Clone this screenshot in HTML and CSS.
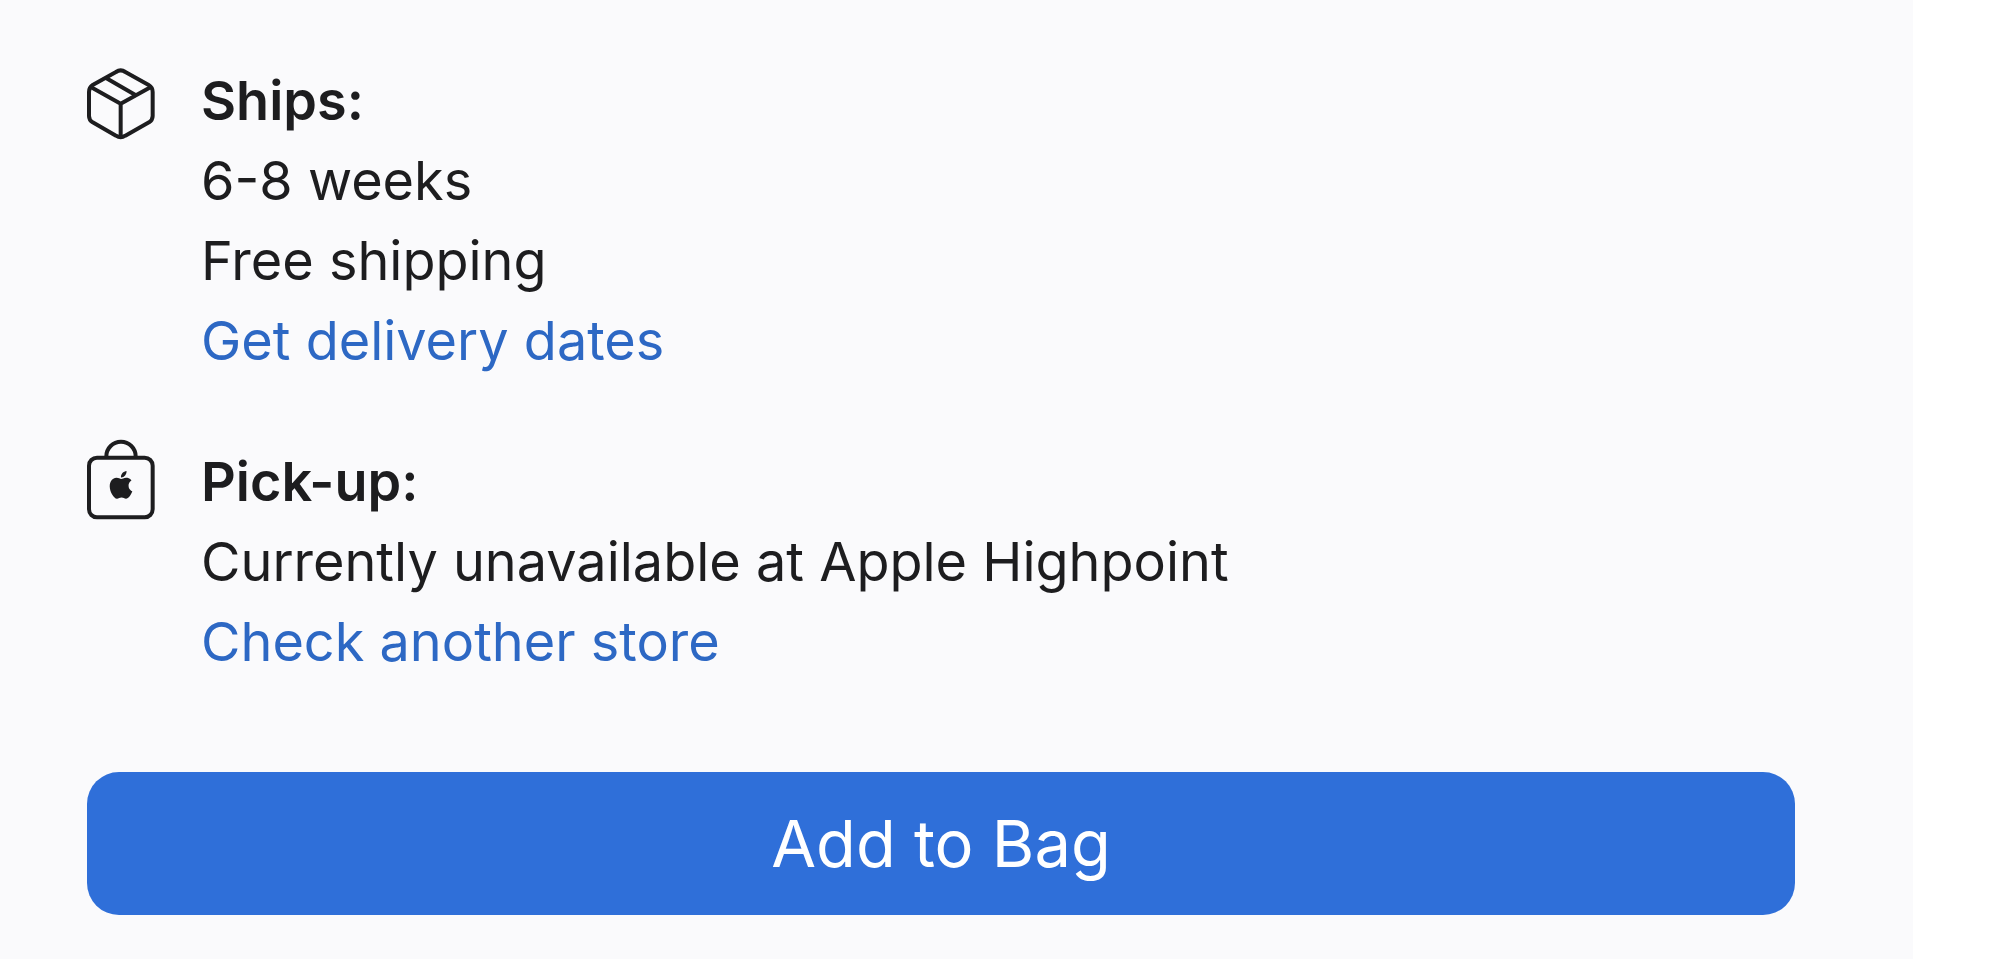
FILE: index.html
```
<!DOCTYPE html>
<html lang="en">
<head>
    <meta charset="UTF-8">
    <meta name="viewport" content="width=device-width, initial-scale=1.0">
    <title>Add to Bag</title>
    <link rel="stylesheet" href="styles.css">
</head>
<body>
    <main class="panel">
        <section class="option">
            <svg class="icon" viewBox="51 21 204 252" aria-hidden="true">
                <path class="line" d="M138 66 Q152 56 166 66 L236 105 Q248 112 248 126 L248 198 Q248 210 237 217 L166 257 Q152 266 138 257 L68 217 Q57 210 57 198 L57 126 Q57 112 68 105 Z" />
                <path class="line" d="M61 110 L152 161 L244 110 M152 161 V262 M108 84 L195 134" />
            </svg>
            <div class="details">
                <h2>Ships:</h2>
                <p>6-8 weeks</p>
                <p>Free shipping</p>
                <a href="#">Get delivery dates</a>
            </div>
        </section>

        <section class="option">
            <svg class="icon" viewBox="51 54 204 252" aria-hidden="true">
                <rect class="line" x="57" y="113" width="191" height="179" rx="24" />
                <path class="line" d="M109 113 V109 A44 44 0 0 1 197 109 V113" />
                <path class="apple" transform="translate(111.5 153) scale(3.46)" d="M12.152 6.896c-.948 0-2.415-1.078-3.96-1.04-2.04.027-3.91 1.183-4.961 3.014-2.117 3.675-.546 9.103 1.519 12.09 1.013 1.454 2.208 3.09 3.792 3.039 1.52-.065 2.09-.987 3.935-.987 1.831 0 2.35.987 3.96.948 1.637-.026 2.676-1.48 3.676-2.948 1.156-1.688 1.636-3.325 1.662-3.415-.039-.013-3.182-1.221-3.22-4.857-.026-3.04 2.48-4.494 2.597-4.559-1.429-2.09-3.623-2.324-4.39-2.376-2-.156-3.675 1.09-4.61 1.09zM15.53 3.83c.843-1.012 1.4-2.427 1.245-3.83-1.207.052-2.662.805-3.532 1.818-.78.896-1.454 2.338-1.273 3.714 1.338.104 2.715-.688 3.559-1.701" />
            </svg>
            <div class="details">
                <h2>Pick-up:</h2>
                <p>Currently unavailable at Apple Highpoint</p>
                <a href="#">Check another store</a>
            </div>
        </section>

        <button class="button" type="button">Add to Bag</button>
    </main>
</body>
</html>
```
FILE: styles.css
```
* {
    margin: 0;
    padding: 0;
    box-sizing: border-box;
}

body {
    background: #fff;
    color: #1d1d1f;
    font-family: Inter, "Liberation Sans", sans-serif;
    font-size: 54px;
    line-height: 80px;
}

.panel {
    display: flex;
    flex-direction: column;
    gap: 61px;
    min-height: 100vh;
    margin-right: 87px;
    padding: 61px 118px 44px 87px;
    background: #fafafc;
}

.option {
    display: flex;
    align-items: flex-start;
    gap: 46px;
}

/* icons start a little above the heading line */
.icon {
    flex: none;
    width: 68px;
    height: 84px;
    margin-top: -4px;
}

.line {
    fill: none;
    stroke: #1d1d1f;
    stroke-width: 12;
    stroke-linejoin: round;
}

.apple {
    fill: #1d1d1f;
}

.details {
    display: flex;
    flex-direction: column;
    align-items: flex-start;
}

h2 {
    font-size: inherit;
    font-weight: 600;
}

a {
    color: #2d68c4;
    text-decoration: none;
}

    a:hover {
        text-decoration: underline;
    }

.button {
    margin-top: 29px;
    padding: 31px;
    border: none;
    border-radius: 32px;
    background: #2f6fd9;
    color: #fff;
    font-family: inherit;
    font-size: 65px;
    line-height: 81px;
    cursor: pointer;
}

    .button:hover {
        background: #2a65c8;
    }
```
